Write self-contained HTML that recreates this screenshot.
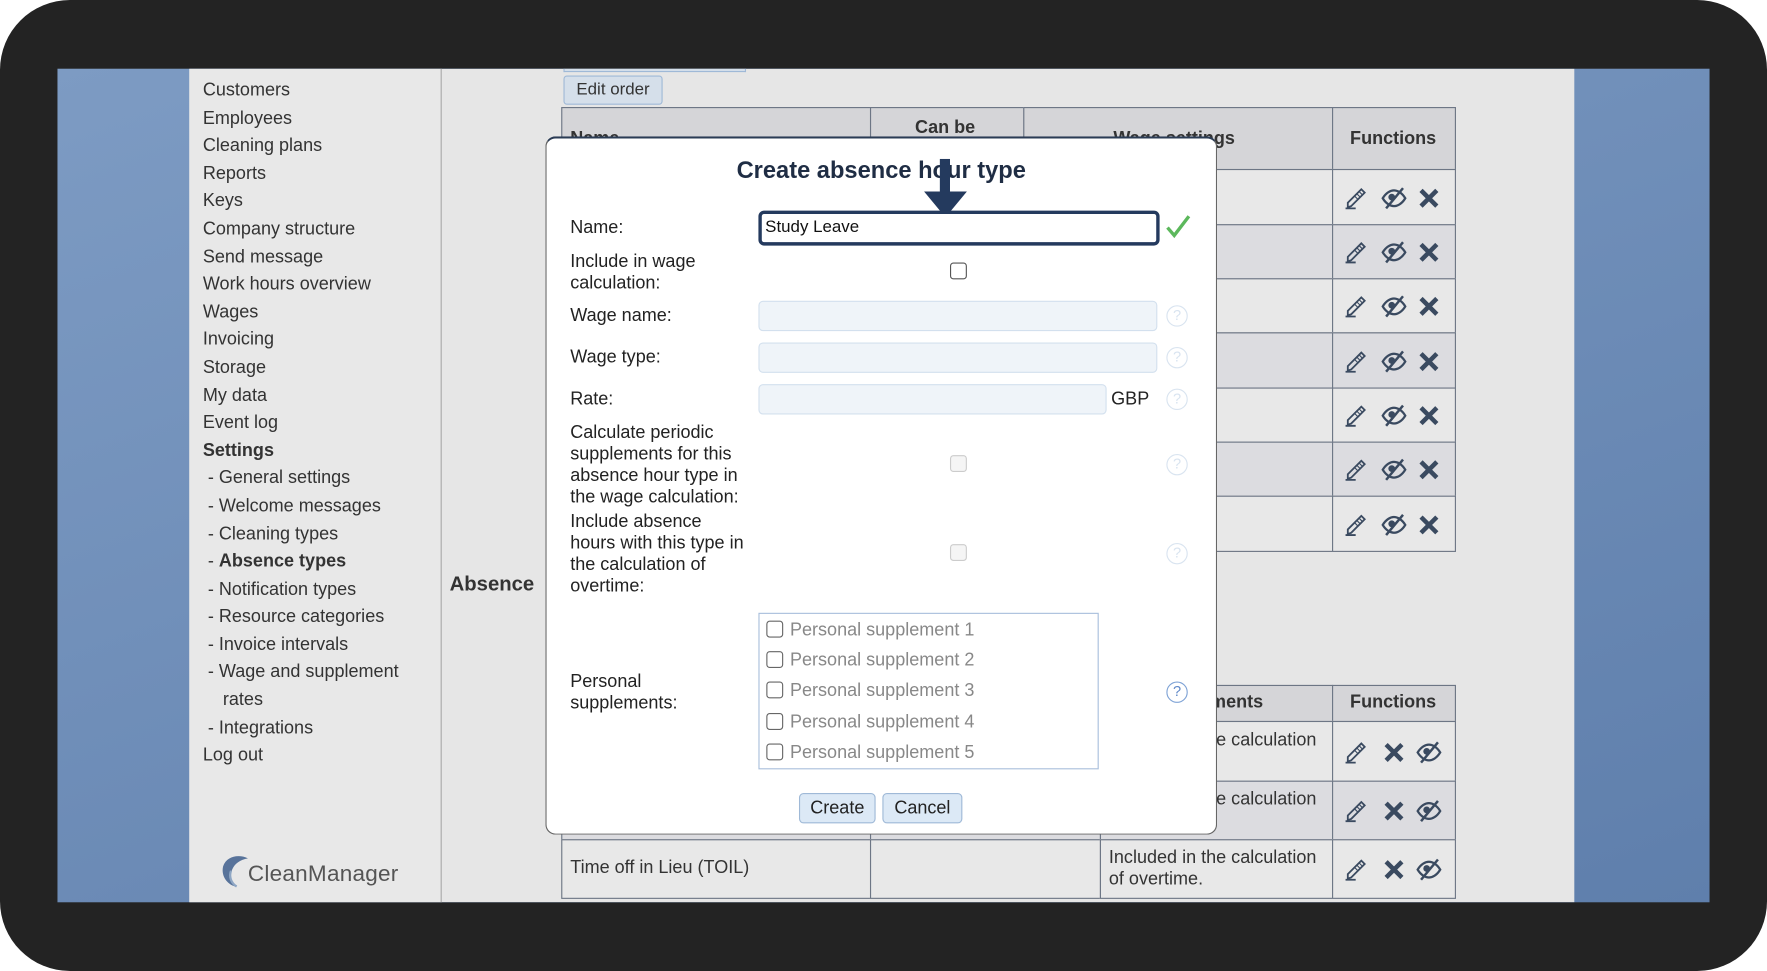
<!DOCTYPE html>
<html><head><meta charset="utf-8"><style>
*{margin:0;padding:0;box-sizing:border-box}
html,body{width:1767px;height:971px;overflow:hidden;background:#fff}
#w{position:absolute;left:0;top:0;width:1568px;height:862px;transform:scale(1.12692,1.12645);transform-origin:0 0;font-family:"Liberation Sans",Arial,sans-serif;color:#222}
.a{position:absolute}
.frame{left:0;top:0;width:1568px;height:862px;background:#232323;border-radius:62px}
.scr{left:51px;top:61px;width:1466px;height:740px;background:linear-gradient(160deg,#7d9bc3,#5f7fac);overflow:hidden}
.main{left:117px;top:0;width:1229px;height:740px;background:#e6e6e6}
.side{left:0;top:0;width:224px;height:740px;background:#e8e8e8;border-right:1px solid #a9a9a9}
.menu{left:12px;top:8px;font-size:16px;line-height:24.6px;color:#333}
.cell{position:absolute;border:1px solid #6d7685}
.ic{position:absolute}
.dlg{background:#fff;border-radius:9px;border:1px solid #666;border-top:2px solid #2b3c55}
.lab{position:absolute;font-size:16px;line-height:19px;color:#222}
.inp{position:absolute;background:#eff4f9;border:1px solid #d3e0ee;border-radius:4px}
.cb{position:absolute;width:15px;height:15px;border:1.5px solid #555;border-radius:3px;background:#fff}
.cbd{border-color:#ccc;background:#f5f5f5}
.hq{position:absolute;width:19px;height:19px;border:1.5px solid #d9e4f0;border-radius:50%;color:#d9e4f0;font-size:13px;text-align:center;line-height:16px}
.btn{position:absolute;height:27px;background:#dce9f6;border:1px solid #9fb9d7;border-radius:4px;font-size:16px;line-height:25px;text-align:center;color:#222}
.ps{position:absolute;left:6px;font-size:16px;color:#888;line-height:20px}
.ps i{display:inline-block;width:15px;height:15px;border:1.5px solid #666;border-radius:3px;vertical-align:-2px;margin-right:6px}
</style></head><body><div id="w">
<div class="a frame"></div>
<div class="a scr">
 <div class="a main">
  <div class="a side">
   <div class="a menu">Customers<br>Employees<br>Cleaning plans<br>Reports<br>Keys<br>Company structure<br>Send message<br>Work hours overview<br>Wages<br>Invoicing<br>Storage<br>My data<br>Event log<br><b>Settings</b><br>&nbsp;- General settings<br>&nbsp;- Welcome messages<br>&nbsp;- Cleaning types<br>&nbsp;- <b>Absence types</b><br>&nbsp;- Notification types<br>&nbsp;- Resource categories<br>&nbsp;- Invoice intervals<br>&nbsp;- Wage and supplement<br>&nbsp;&nbsp;&nbsp;&nbsp;rates<br>&nbsp;- Integrations<br>Log out</div>
   <svg class="a" style="left:28px;top:698px" width="26" height="30" viewBox="0 0 26 30"><path d="M24 3C16-1 5 1 2 10c-2 8 3 16 11 18-4-4-5-10-3-15 2-5 7-9 14-10z" fill="#58739a"/><path d="M14 28c-5-3-7-9-5-14" stroke="#8ea6c4" stroke-width="2" fill="none"/></svg>
   <div class="a" style="left:52px;top:704px;font-size:20px;color:#555;letter-spacing:.2px">CleanManager</div>
  </div>
  <div class="a" style="left:332px;top:0;width:162px;height:3px;background:#d5dfea;border:1px solid #9fb9d7;border-top:none"></div>
  <div class="a" style="left:332px;top:6px;width:88px;height:26px;background:#d5dfea;border:1px solid #9fb9d7;border-radius:3px;font-size:15px;line-height:24px;text-align:center;color:#333">Edit order</div>
  <div class="a" style="left:231px;top:447px;font-size:18px;font-weight:bold;color:#333">Absence</div>
 </div>
</div>
<script>
var W=document.getElementById('w'),o='';
function c(x,y,w,h,bg){o+='<div class="cell" style="left:'+x+'px;top:'+y+'px;width:'+(w+1)+'px;height:'+(h+1)+'px;background:'+bg+'"></div>';}
function tx(x,y,s,st){o+='<div class="a" style="left:'+x+'px;top:'+y+'px;font-size:16px;line-height:19px;color:#333;'+(st||'')+'">'+s+'</div>';}
var pen='<path d="M3 20l3-1 12-12-3-3L3 16z" fill="none" stroke="#3a4a60" stroke-width="1.6"/><path d="M1 21h9" stroke="#3a4a60" stroke-width="1.6"/><path d="M13 6l3 3M11 8l3 3M9 10l3 3" stroke="#3a4a60" stroke-width="1"/>';
var eye='<path d="M2 12c3-5 7-7 10-7s7 2 10 7c-3 5-7 7-10 7s-7-2-10-7z" fill="none" stroke="#3a4a60" stroke-width="2"/><circle cx="10" cy="11" r="3" fill="#3a4a60"/><path d="M5 21L20 3" stroke="#3a4a60" stroke-width="2.2"/>';
var x='<path d="M5 5l14 14M19 5L5 19" stroke="#3a4a60" stroke-width="4"/>';
function ics(y,order){var s='';for(var i=0;i<3;i++){s+='<svg class="ic" style="left:'+(1193+i*31.5)+'px;top:'+(y-11)+'px" width="24" height="24" viewBox="0 0 24 24">'+order[i]+'</svg>';}o+=s;}
c(498,95,274,55,'#d5d5d8');c(772,95,136,55,'#d5d5d8');c(908,95,274,55,'#d5d5d8');c(1182,95,109,55,'#d5d5d8');
tx(506,114,'<b>Name</b>');tx(812,104,'<b>Can be</b>');tx(988,114,'<b>Wage settings</b>');tx(1198,114,'<b>Functions</b>');
var ys=[150,199,247,295,344,392,440,489];
for(var i=0;i<7;i++){var bg=i%2?'#dcdce0':'#e8e8e8';c(498,ys[i],274,ys[i+1]-ys[i],bg);c(772,ys[i],136,ys[i+1]-ys[i],bg);c(908,ys[i],274,ys[i+1]-ys[i],bg);c(1182,ys[i],109,ys[i+1]-ys[i],bg);ics((ys[i]+ys[i+1])/2,[pen,eye,x]);}
c(498,608,274,32,'#d5d5d8');c(772,608,204,32,'#d5d5d8');c(976,608,206,32,'#d5d5d8');c(1182,608,109,32,'#d5d5d8');
tx(1024,614,'<b>Adjustments</b>');tx(1198,614,'<b>Functions</b>');
var y2=[640,693,745,797];
for(var i=0;i<3;i++){var bg=i%2?'#dcdce0':'#e8e8e8';c(498,y2[i],274,y2[i+1]-y2[i],bg);c(772,y2[i],204,y2[i+1]-y2[i],bg);c(976,y2[i],206,y2[i+1]-y2[i],bg);c(1182,y2[i],109,y2[i+1]-y2[i],bg);ics((y2[i]+y2[i+1])/2,[pen,x,eye]);}
tx(984,648,'Included in the calculation');tx(984,700,'Included in the calculation');
tx(506,761,'Time off in Lieu (TOIL)');tx(984,752,'Included in the calculation<br>of overtime.');
var d=document.createElement('div');d.innerHTML=o;while(d.firstChild)W.appendChild(d.firstChild);
</script>
<div class="a dlg" style="left:484px;top:121px;width:596px;height:620px">
 <div class="a" style="left:0;width:594px;top:17px;text-align:center;font-size:21px;font-weight:bold;color:#1f2d44">Create absence hour type</div>
 <svg class="a" style="left:334px;top:18px" width="40" height="54" viewBox="0 0 40 54"><rect x="15" y="0" width="9" height="32" fill="#243a5e"/><path d="M1 29h38L20 52z" fill="#243a5e"/></svg>
 <div class="lab" style="left:21px;top:70px">Name:</div>
 <div class="a" style="left:188px;top:64px;width:356px;height:31px;border:3px solid #243a5e;border-radius:5px;background:#fff;font-size:15px;line-height:24px;padding-left:3px;color:#111">Study Leave</div>
 <svg class="a" style="left:548px;top:66px" width="24" height="24" viewBox="0 0 24 24"><path d="M3 13l6 7L22 3" fill="none" stroke="#5cb85c" stroke-width="3"/></svg>
 <div class="lab" style="left:21px;top:100px">Include in wage<br>calculation:</div>
 <div class="cb" style="left:358px;top:110px"></div>
 <div class="lab" style="left:21px;top:148px">Wage name:</div>
 <div class="inp" style="left:188px;top:144px;width:354px;height:27px"></div>
 <div class="hq" style="left:550px;top:148px">?</div>
 <div class="lab" style="left:21px;top:185px">Wage type:</div>
 <div class="inp" style="left:188px;top:181px;width:354px;height:27px"></div>
 <div class="hq" style="left:550px;top:185px">?</div>
 <div class="lab" style="left:21px;top:222px">Rate:</div>
 <div class="inp" style="left:188px;top:218px;width:309px;height:27px"></div>
 <div class="lab" style="left:501px;top:222px">GBP</div>
 <div class="hq" style="left:550px;top:222px">?</div>
 <div class="lab" style="left:21px;top:252px">Calculate periodic<br>supplements for this<br>absence hour type in<br>the wage calculation:</div>
 <div class="cb cbd" style="left:358px;top:281px"></div>
 <div class="hq" style="left:550px;top:280px">?</div>
 <div class="lab" style="left:21px;top:331px">Include absence<br>hours with this type in<br>the calculation of<br>overtime:</div>
 <div class="cb cbd" style="left:358px;top:360px"></div>
 <div class="hq" style="left:550px;top:359px">?</div>
 <div class="lab" style="left:21px;top:473px">Personal<br>supplements:</div>
 <div class="a" style="left:188px;top:421px;width:302px;height:139px;border:1px solid #a9bfdc">
  <div class="ps" style="top:5px"><i></i>Personal supplement 1</div>
  <div class="ps" style="top:32px"><i></i>Personal supplement 2</div>
  <div class="ps" style="top:59px"><i></i>Personal supplement 3</div>
  <div class="ps" style="top:87px"><i></i>Personal supplement 4</div>
  <div class="ps" style="top:114px"><i></i>Personal supplement 5</div>
 </div>
 <div class="hq" style="left:550px;top:482px;border-color:#7fa3d6;color:#5f88c8">?</div>
 <div class="btn" style="left:224px;top:581px;width:68px">Create</div>
 <div class="btn" style="left:298px;top:581px;width:71px">Cancel</div>
</div>
</div>
</body></html>
